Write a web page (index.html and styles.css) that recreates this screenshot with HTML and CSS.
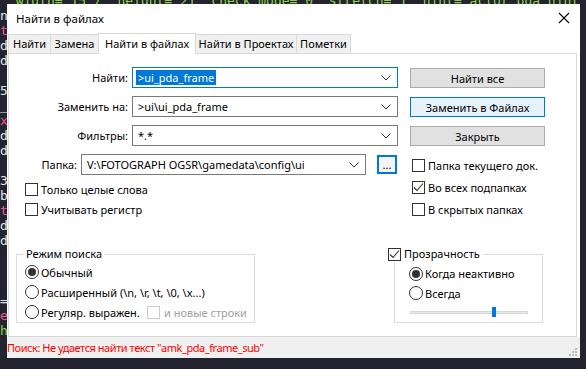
FILE: index.html
```html
<!DOCTYPE html>
<html lang="ru">
<head>
  <meta charset="UTF-8">
  <title>Найти в файлах</title>
  <link rel="stylesheet" href="styles.css">
</head>
<body>
  <pre class="editor"><span class="top">  width= 15 /  height= 21  check_mode= 0  stretch= 1  hint= actor_pda_hint <span class="pk">&gt;</span></span>
n
<span class="pk">t</span>
d
d

5
_
<span class="pk">x</span>
d
d

3
b
<span class="pk">t</span>
d
d



=
<span class="pk">e</span>
<span class="gr">h</span></pre>

  <div class="dialog">
    <div class="titlebar">
      <span>Найти в файлах</span>
      <svg class="close" width="12" height="12" viewBox="0 0 12 12"><path d="M1 1L11 11M11 1L1 11" stroke="#000" stroke-width="1.1"/></svg>
    </div>

    <div class="tabs">
      <div class="tab t1">Найти</div>
      <div class="tab t2">Замена</div>
      <div class="tab t3 active">Найти в файлах</div>
      <div class="tab t4">Найти в Проектах</div>
      <div class="tab t5">Пометки</div>
    </div>

    <div class="panel">
      <div class="fields">
        <label>Найти:</label>
        <div class="combo focus"><span class="sel">&gt;ui_pda_frame</span><svg class="chev" width="10" height="6" viewBox="0 0 10 6"><path d="M0.5 0.5L5 5L9.5 0.5" fill="none" stroke="#333"/></svg></div>
        <button class="btn">Найти все</button>

        <label>Заменить на:</label>
        <div class="combo"><span>&gt;ui\ui_pda_frame</span><svg class="chev" width="10" height="6" viewBox="0 0 10 6"><path d="M0.5 0.5L5 5L9.5 0.5" fill="none" stroke="#333"/></svg></div>
        <button class="btn default">Заменить в Файлах</button>

        <label>Фильтры:</label>
        <div class="combo"><span>*.*</span><svg class="chev" width="10" height="6" viewBox="0 0 10 6"><path d="M0.5 0.5L5 5L9.5 0.5" fill="none" stroke="#333"/></svg></div>
        <button class="btn">Закрыть</button>
      </div>

      <div class="lower">
        <div class="lower-left">
          <div class="folder-row">
            <label>Папка:</label>
            <div class="combo wide"><span>V:\FOTOGRAPH OGSR\gamedata\config\ui</span><svg class="chev" width="10" height="6" viewBox="0 0 10 6"><path d="M0.5 0.5L5 5L9.5 0.5" fill="none" stroke="#333"/></svg></div>
            <button class="dots">...</button>
          </div>
          <div class="checks-left">
            <div class="check"><span class="box"></span>Только целые слова</div>
            <div class="check"><span class="box"></span>Учитывать регистр</div>
          </div>
        </div>
        <div class="lower-right">
          <div class="check"><span class="box"></span>Папка текущего док.</div>
          <div class="check"><span class="box checked"><svg width="11" height="11" viewBox="0 0 11 11"><path d="M1 5.5L4 8.5L10 1.5" fill="none" stroke="#333" stroke-width="1.1"/></svg></span>Во всех подпапках</div>
          <div class="check"><span class="box"></span>В скрытых папках</div>
        </div>
      </div>

      <div class="groups">
        <fieldset class="group mode">
          <legend>Режим поиска</legend>
          <div class="radio"><span class="dot on"></span>Обычный</div>
          <div class="radio"><span class="dot"></span>Расширенный (\n, \r, \t, \0, \x...)</div>
          <div class="radio"><span class="dot"></span><span class="regex">Регуляр. выражен.</span><span class="box off"></span><span class="muted">и новые строки</span></div>
        </fieldset>

        <fieldset class="group trans">
          <legend><span class="box checked"><svg width="11" height="11" viewBox="0 0 11 11"><path d="M1 5.5L4 8.5L10 1.5" fill="none" stroke="#333" stroke-width="1.1"/></svg></span>Прозрачность</legend>
          <div class="radio"><span class="dot on"></span>Когда неактивно</div>
          <div class="radio"><span class="dot"></span>Всегда</div>
          <div class="slider"><span class="thumb"></span></div>
        </fieldset>
      </div>
    </div>

    <div class="status">
      <span>Поиск: Не удается найти текст "amk_pda_frame_sub"</span>
      <svg class="grip" width="10" height="10" viewBox="0 0 10 10" fill="#bcbcbc">
        <rect x="7" y="1" width="2" height="2"/>
        <rect x="4" y="4" width="2" height="2"/><rect x="7" y="4" width="2" height="2"/>
        <rect x="1" y="7" width="2" height="2"/><rect x="4" y="7" width="2" height="2"/><rect x="7" y="7" width="2" height="2"/>
      </svg>
    </div>
  </div>
</body>
</html>
```

FILE: styles.css
```css
body {
  margin: 0;
  width: 586px;
  height: 369px;
  overflow: hidden;
  background: #23242f;
  font-family: 'Noto Sans', 'Open Sans', sans-serif;
  font-size: 11px;
  color: #000000;
}

.editor {
  margin: -7px 0 0 0;
  font-family: 'DejaVu Sans Mono', monospace;
  font-size: 13px;
  line-height: 15px;
  color: #e6e6e6;
  white-space: pre;
  overflow: hidden;
}

.editor .top {
  color: #8fd14f;
}

.pk {
  color: #f0568a;
}

.gr {
  color: #8fd14f;
}

/* dialog window over the editor */
.dialog {
  position: absolute;
  left: 7px;
  top: 4px;
  width: 573px;
  height: 354px;
  background: #ffffff;
  display: flex;
  flex-direction: column;
}

.titlebar {
  height: 29px;
  display: flex;
  align-items: center;
  justify-content: space-between;
  padding: 0 10px 0 9px;
  font-size: 11.5px;
}

.close {
  margin-top: -1px;
}

.tabs {
  height: 20px;
  display: flex;
  align-items: flex-end;
  margin-left: 1px;
  position: relative;
  z-index: 1;
}

.tab {
  height: 19px;
  box-sizing: border-box;
  background: #f0f0f0;
  border: 1px solid #d9d9d9;
  border-bottom: none;
  margin-right: -1px;
  text-align: center;
  line-height: 18px;
  white-space: nowrap;
}

.t1 { width: 43px; }
.t2 { width: 49px; }
.t3 { width: 98px; }
.t4 { width: 102px; }
.t5 { width: 55px; }

.tab.active {
  height: 21px;
  background: #ffffff;
  margin-bottom: -1px;
  line-height: 20px;
  position: relative;
}

.panel {
  height: 284px;
  box-sizing: border-box;
  margin: 0 3px 0 1px;
  border: 1px solid #d9d9d9;
  background: #ffffff;
}

.fields {
  display: grid;
  grid-template-columns: 119px 266px 143px;
  grid-auto-rows: 21px;
  column-gap: 4px;
  row-gap: 8px;
  margin-top: 13px;
  align-items: center;
}

.fields label,
.folder-row label {
  text-align: right;
}

.combo {
  height: 21px;
  box-sizing: border-box;
  border: 1px solid #7a7a7a;
  background: #ffffff;
  display: flex;
  align-items: center;
  padding-left: 5px;
  position: relative;
  white-space: nowrap;
}

.combo.focus {
  border-color: #0078d7;
  padding-left: 3px;
}

.combo .sel {
  background: #0078d7;
  color: #ffffff;
  padding: 0 2px;
  line-height: 15px;
}

.chev {
  margin-left: auto;
  margin-right: 6px;
  flex-shrink: 0;
}

.btn {
  width: 135px;
  height: 20px;
  margin-left: 8px;
  margin-top: 1px;
  box-sizing: border-box;
  border: 1px solid #adadad;
  background: #e1e1e1;
  font: inherit;
  color: #000000;
  padding: 0;
}

.btn.default {
  border-color: #0078d7;
  background: #e5f1fb;
}

.lower {
  display: flex;
  margin-top: 8px;
}

.lower-left {
  width: 388px;
}

.folder-row {
  display: flex;
  align-items: center;
  height: 21px;
}

.folder-row label {
  width: 68px;
}

.combo.wide {
  width: 285px;
  margin-left: 4px;
}

.dots {
  width: 20px;
  height: 19px;
  margin-left: 11px;
  box-sizing: border-box;
  border: 2px solid #0078d7;
  background: #f4f4f4;
  font: inherit;
  line-height: 12px;
  padding: 0;
}

.checks-left {
  margin: 4px 0 0 16px;
}

.checks-left .check {
  height: 20px;
}

.lower-right {
  margin-left: 15px;
}

.lower-right .check {
  height: 22px;
}

.check {
  display: flex;
  align-items: center;
  white-space: nowrap;
}

.box {
  width: 13px;
  height: 13px;
  box-sizing: border-box;
  border: 1px solid #333333;
  background: #ffffff;
  margin-right: 3px;
  display: inline-flex;
  align-items: center;
  justify-content: center;
  flex-shrink: 0;
}

.box.off {
  border-color: #cccccc;
  margin-right: 4px;
}

.muted {
  color: #a0a0a0;
}

.groups {
  display: flex;
  margin-top: 26px;
}

.group {
  margin: 0;
  padding: 0 0 0 8px;
  border: 1px solid #dcdcdc;
  height: 77px;
  box-sizing: border-box;
}

.group legend {
  padding: 0 2px;
  margin-left: -1px;
  line-height: 16px;
}

.mode {
  width: 239px;
  margin-left: 7px;
}

.trans {
  width: 149px;
  margin-left: 139px;
  padding-left: 14px;
}

.trans legend {
  display: flex;
  align-items: center;
  margin-left: -21px;
  padding: 0 3px 0 0;
  background: #ffffff;
}

.radio {
  display: flex;
  align-items: center;
  height: 20px;
  white-space: nowrap;
}

.trans .radio {
  height: 19.5px;
  position: relative;
  top: 2px;
}

.regex {
  width: 106px;
}

.dot {
  width: 14px;
  height: 14px;
  box-sizing: border-box;
  border: 1px solid #333333;
  border-radius: 50%;
  margin-right: 2px;
  display: inline-flex;
  align-items: center;
  justify-content: center;
  flex-shrink: 0;
}

.dot.on::after {
  content: "";
  width: 8px;
  height: 8px;
  border-radius: 50%;
  background: #333333;
}

.slider {
  width: 118px;
  height: 3px;
  margin: 10px 0 0 1px;
  background: #e7eaea;
  border: 1px solid #d6d6d6;
  box-sizing: border-box;
  position: relative;
}

.thumb {
  position: absolute;
  left: 81px;
  top: -5px;
  width: 4px;
  height: 10px;
  background: #0078d7;
}

.status {
  height: 21px;
  background: #f0f0f0;
  color: #ff0000;
  display: flex;
  align-items: center;
  padding-left: 0;
  position: relative;
  font-size: 11px;
  letter-spacing: -0.45px;
}

.grip {
  position: absolute;
  right: 2px;
  bottom: 1px;
}
```
